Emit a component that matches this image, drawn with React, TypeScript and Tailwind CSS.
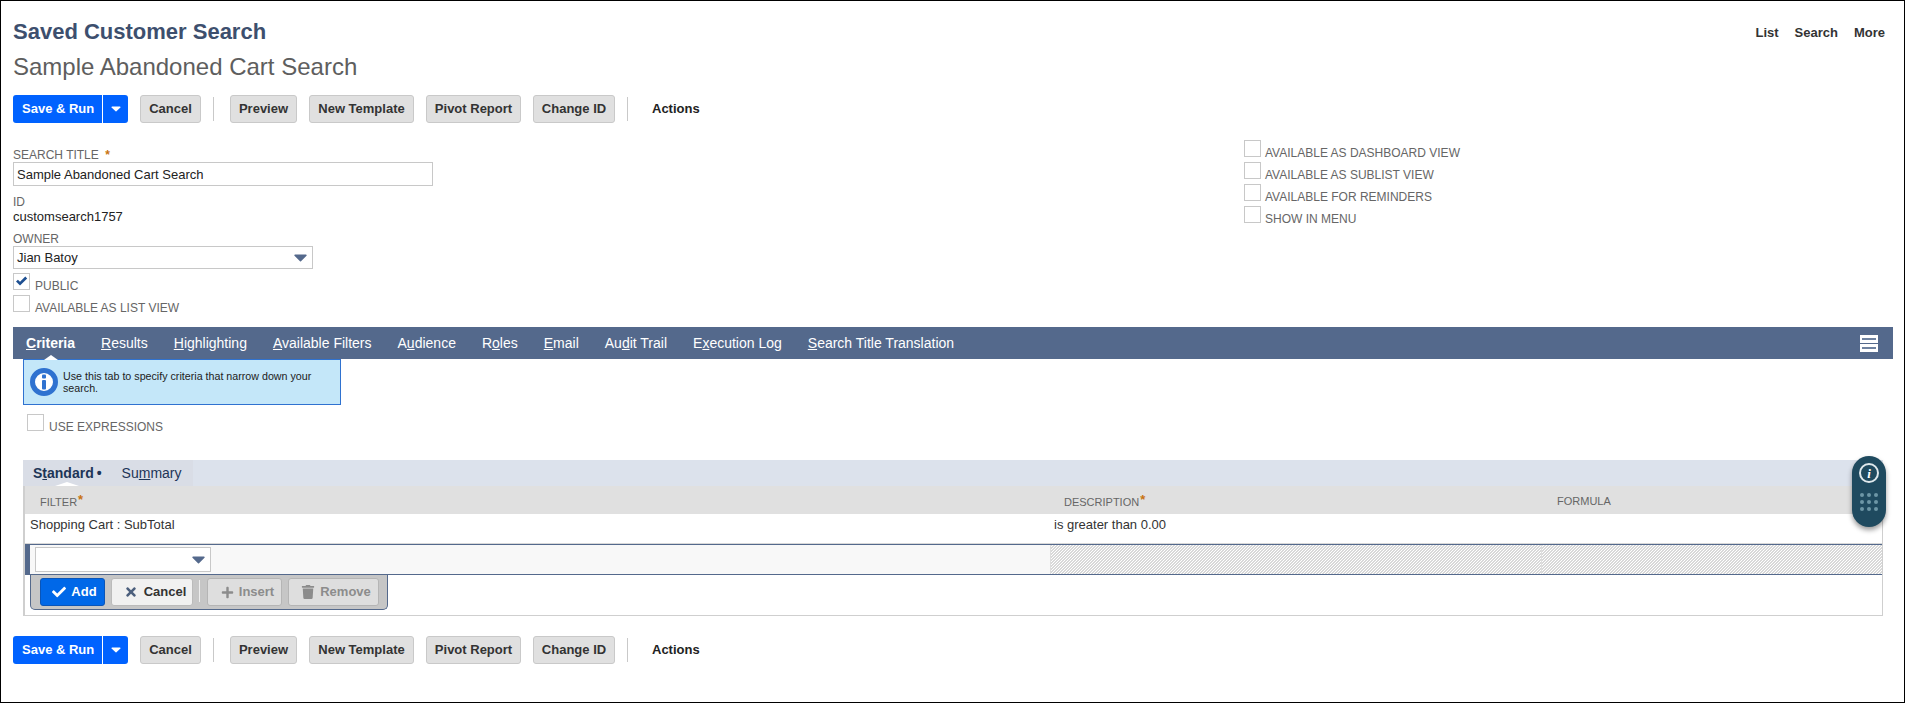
import { FaCheck, FaPlus, FaTimes, FaTrash } from "react-icons/fa";

function Asterisk({ className = "" }: { className?: string }) {
  return <span className={`font-bold text-[#c8730f] ${className}`}>*</span>;
}

function Toolbar() {
  const grayBtn =
    "flex h-[28px] items-center justify-center rounded-[3px] border border-[#c9c9c9] bg-[#e0e0e0] text-[13px] font-bold text-[#333]";
  return (
    <div className="flex h-[28px] items-center">
      <div className="flex h-[28px] w-[115px] items-center rounded-[3px] bg-[#0062ff] text-[13px] font-bold text-white">
        <span className="w-[89px] pl-[9px]">Save &amp; Run</span>
        <span className="h-full w-px bg-white" />
        <span className="flex flex-1 justify-center">
          <svg width="10" height="6" viewBox="0 0 10 6">
            <path d="M1 .5h8a.6.6 0 0 1 .4 1L5.4 5.3a.6.6 0 0 1-.8 0L.6 1.5A.6.6 0 0 1 1 .5z" fill="#fff" />
          </svg>
        </span>
      </div>
      <button className={`ml-[12px] w-[61px] ${grayBtn}`}>Cancel</button>
      <span className="ml-[12px] h-[24px] w-px bg-[#c9c9c9]" />
      <button className={`ml-[16px] w-[67px] ${grayBtn}`}>Preview</button>
      <button className={`ml-[12px] w-[105px] ${grayBtn}`}>New Template</button>
      <button className={`ml-[12px] w-[95px] ${grayBtn}`}>Pivot Report</button>
      <button className={`ml-[12px] w-[82px] ${grayBtn}`}>Change ID</button>
      <span className="ml-[12px] h-[24px] w-px bg-[#c9c9c9]" />
      <span className="ml-[24px] text-[13px] font-bold text-[#222]">Actions</span>
    </div>
  );
}

function Check({ label, checked = false, tight = false }: { label: string; checked?: boolean; tight?: boolean }) {
  return (
    <div className="flex h-[17px] items-start">
      <span className="flex h-[17px] w-[17px] shrink-0 items-center justify-center border border-[#c8c8c8] bg-white">
        {checked && (
          <svg width="13" height="11" viewBox="0 0 13 11">
            <path d="M1 5.6 L2.9 3.7 L5 5.8 L10.3 .6 L12.2 2.5 L5 9.6 Z" fill="#1d4f91" />
          </svg>
        )}
      </span>
      <span
        className={`${tight ? "ml-[4px]" : "ml-[5px]"} mt-[6px] whitespace-nowrap text-[12px] leading-[14px] text-[#666]`}
      >
        {label}
      </span>
    </div>
  );
}

function Caret() {
  return (
    <svg width="13" height="8" viewBox="0 0 13 8">
      <path d="M1 .5h11a.7.7 0 0 1 .5 1.2L7 7.3a.7.7 0 0 1-1 0L.5 1.7A.7.7 0 0 1 1 .5z" fill="#54698c" />
    </svg>
  );
}

const tabs: [string, string, string, string][] = [
  ["", "C", "riteria", "font-bold"],
  ["", "R", "esults", ""],
  ["", "H", "ighlighting", ""],
  ["", "A", "vailable Filters", ""],
  ["A", "u", "dience", ""],
  ["R", "o", "les", ""],
  ["", "E", "mail", ""],
  ["Au", "d", "it Trail", ""],
  ["E", "x", "ecution Log", ""],
  ["", "S", "earch Title Translation", ""],
];

export default function App() {
  return (
    <div className="relative h-[703px] w-[1905px] overflow-hidden border border-black bg-white pl-[12px] pr-[11px] pt-[19px] font-['Liberation_Sans',Arial,sans-serif]">
      {/* header */}
      <div className="flex h-[32px] items-start justify-between">
        <div className="text-[22px] font-bold leading-[23px] text-[#3d4f6e]">Saved Customer Search</div>
        <div className="mt-[5px] flex gap-[16px] pr-[8px] text-[13px] font-bold leading-[16px] text-[#333]">
          <span>List</span>
          <span>Search</span>
          <span>More</span>
        </div>
      </div>
      <div className="h-[30px] text-[24px] leading-[30px] text-[#5e5e5e]">Sample Abandoned Cart Search</div>
      <div className="mt-[13px]">
        <Toolbar />
      </div>

      {/* main fields */}
      <div className="mt-[17px] flex h-[172px]">
        <div className="w-[1231px] pt-[8px]">
          <div className="text-[12px] leading-[14px] text-[#666]">
            SEARCH TITLE <Asterisk className="ml-[3px]" />
          </div>
          <div className="flex h-[24px] w-[420px] items-center border border-[#c8c8c8] pl-[3px] pt-px text-[13px] text-[#222]">
            Sample Abandoned Cart Search
          </div>
          <div className="mt-[9px] text-[12px] leading-[14px] text-[#666]">ID</div>
          <div className="text-[13px] leading-[16px] text-[#222]">customsearch1757</div>
          <div className="mt-[7px] text-[12px] leading-[14px] text-[#666]">OWNER</div>
          <div className="flex h-[23px] w-[300px] items-center justify-between border border-[#c8c8c8] pl-[3px] pr-[5px] text-[13px] text-[#222]">
            Jian Batoy
            <Caret />
          </div>
          <div className="mt-[4px] flex flex-col gap-[5px]">
            <Check label="PUBLIC" checked />
            <Check label="AVAILABLE AS LIST VIEW" />
          </div>
        </div>
        <div className="flex flex-col gap-[5px]">
          <Check tight label="AVAILABLE AS DASHBOARD VIEW" />
          <Check tight label="AVAILABLE AS SUBLIST VIEW" />
          <Check tight label="AVAILABLE FOR REMINDERS" />
          <Check tight label="SHOW IN MENU" />
        </div>
      </div>

      {/* tab bar */}
      <div className="mt-[15px] flex h-[32px] items-center justify-between bg-[#54698c] pl-[13px] pr-[15px]">
        <div className="flex gap-[26px] pt-px text-[14px] text-white">
          {tabs.map(([before, key, after, weight]) => (
            <span key={key + after} className={weight}>
              {before}
              <u>{key}</u>
              {after}
            </span>
          ))}
        </div>
        <svg width="18" height="17" viewBox="0 0 18 17">
          <rect width="18" height="8" fill="#fff" />
          <rect y="9" width="18" height="8" fill="#fff" />
          <rect x="2" y="3" width="14" height="2" fill="#6f82a0" />
          <rect x="2" y="12" width="14" height="2" fill="#6f82a0" />
        </svg>
      </div>

      {/* help box */}
      <div className="relative ml-[10px] flex h-[46px] w-[318px] items-center border border-[#2f72d0] bg-[#c4e7f9] pl-[6px]">
        <span className="absolute left-[20px] top-[-5px] h-0 w-0 border-x-[7px] border-b-[5px] border-x-transparent border-b-white" />
        <svg width="28" height="28" viewBox="0 0 28 28" className="shrink-0">
          <circle cx="14" cy="14" r="11.5" fill="#fff" stroke="#2f72d0" strokeWidth="5" />
          <rect x="12" y="6.5" width="4" height="4" rx="1" fill="#2f72d0" />
          <rect x="12" y="12" width="4" height="9.5" rx="1" fill="#2f72d0" />
        </svg>
        <div className="ml-[5px] w-[270px] text-[10.7px] leading-[12px] text-[#222]">
          Use this tab to specify criteria that narrow down your search.
        </div>
      </div>

      <div className="ml-[14px] mt-[9px]">
        <Check label="USE EXPRESSIONS" />
      </div>

      {/* criteria sublist */}
      <div className="ml-[10px] mr-[10px] mt-[29px]">
        <div className="flex h-[26px] bg-[#dce2ec]">
          <div className="relative flex w-[170px] items-center bg-[#d9dde6] pl-[10px] text-[14px] text-[#1d3557]">
            <span className="font-bold">
              S<u>t</u>andard
            </span>
            <span className="ml-[3px] font-bold">•</span>
            <span className="ml-[20px]">
              Su<u>m</u>mary
            </span>
            <span className="absolute bottom-0 left-[32px] h-0 w-0 border-x-[12px] border-b-[4px] border-x-transparent border-b-white" />
          </div>
        </div>
        <div className="h-[130px] border border-l-2 border-t-0 border-[#cfcfcf]">
          <div className="flex h-[28px] items-center bg-[#e0e0e0] pt-[3px] text-[11px] text-[#666]">
            <div className="w-[1025px] pl-[15px]">
              FILTER
              <Asterisk className="relative top-[-2px] ml-px text-[13px]" />
            </div>
            <div className="w-[491px] pl-[14px]">
              DESCRIPTION
              <Asterisk className="relative top-[-2px] ml-px text-[13px]" />
            </div>
            <div className="pl-[16px]">FORMULA</div>
          </div>
          <div className="flex h-[30px] border-b border-[#d8d8d8] pt-[3px] text-[13px] leading-[16px] text-[#333]">
            <div className="w-[1025px] pl-[5px]">Shopping Cart : SubTotal</div>
            <div className="pl-[4px]">is greater than 0.00</div>
          </div>
          <div className="flex h-[31px] border-y border-[#54698c]">
            <div className="flex w-[1025px] items-center border-l-[5px] border-[#54698c] bg-[#f8f8f8] pl-[5px]">
              <div className="flex h-[25px] w-[176px] items-center justify-end border border-[#c8c8c8] bg-white pr-[5px]">
                <Caret />
              </div>
            </div>
            <div className="w-[491px] border-l border-[#ddd] bg-[repeating-linear-gradient(135deg,#d8d8d8_0,#d8d8d8_1.06px,#fff_1.06px,#fff_2.12px)]" />
            <div className="flex-1 border-l border-[#ddd] bg-[repeating-linear-gradient(135deg,#d8d8d8_0,#d8d8d8_1.06px,#fff_1.06px,#fff_2.12px)]" />
          </div>
          <div className="ml-[5px] flex h-[35px] w-[358px] items-start rounded-b-[5px] border border-t-0 border-[#54698c] bg-[#c6c6c6] pl-[9px] pt-[3px] text-[13px] font-bold">
            <button className="flex h-[28px] w-[65px] items-center justify-center gap-[5px] rounded-[3px] border border-[#0a55b8] bg-[#0068e8] pl-[4px] text-white">
              <FaCheck className="text-[14px]" />
              Add
            </button>
            <button className="ml-[6px] flex h-[28px] w-[82px] items-center justify-center gap-[6px] rounded-[3px] border border-[#bbb] bg-[#f1f1f1] pl-[6px] text-[#333]">
              <FaTimes className="text-[14px] text-[#4c5f7d]" />
              Cancel
            </button>
            <span className="ml-[6px] mt-[2px] h-[22px] w-px bg-[#eee]" />
            <button className="ml-[7px] flex h-[28px] w-[75px] items-center justify-center gap-[5px] rounded-[3px] border border-[#b5b5b5] bg-[#dedede] pl-[6px] text-[#8c8c8c]">
              <FaPlus className="text-[13px]" />
              Insert
            </button>
            <button className="ml-[6px] flex h-[28px] w-[91px] items-center justify-center gap-[5px] rounded-[3px] border border-[#b5b5b5] bg-[#dedede] pl-[5px] text-[#8c8c8c]">
              <FaTrash className="text-[14px]" />
              Remove
            </button>
          </div>
        </div>
      </div>

      <div className="mt-[20px]">
        <Toolbar />
      </div>

      {/* floating help widget */}
      <div className="absolute left-[1851px] top-[455px] flex h-[71px] w-[34px] flex-col items-center rounded-full bg-[#1f4a5f] pt-[7px] shadow-[0_3px_5px_rgba(0,0,0,0.4)]">
        <span className="flex h-[20px] w-[20px] items-center justify-center rounded-full border-2 border-[#dfe8ec] font-['Liberation_Serif',serif] text-[13px] font-bold italic leading-none text-white">
          i
        </span>
        <div className="mt-[10px] grid grid-cols-3 gap-[3px]">
          {Array.from({ length: 9 }, (_, i) => (
            <span key={i} className="h-[4px] w-[4px] rounded-full bg-[#6d96a6]" />
          ))}
        </div>
      </div>
    </div>
  );
}
